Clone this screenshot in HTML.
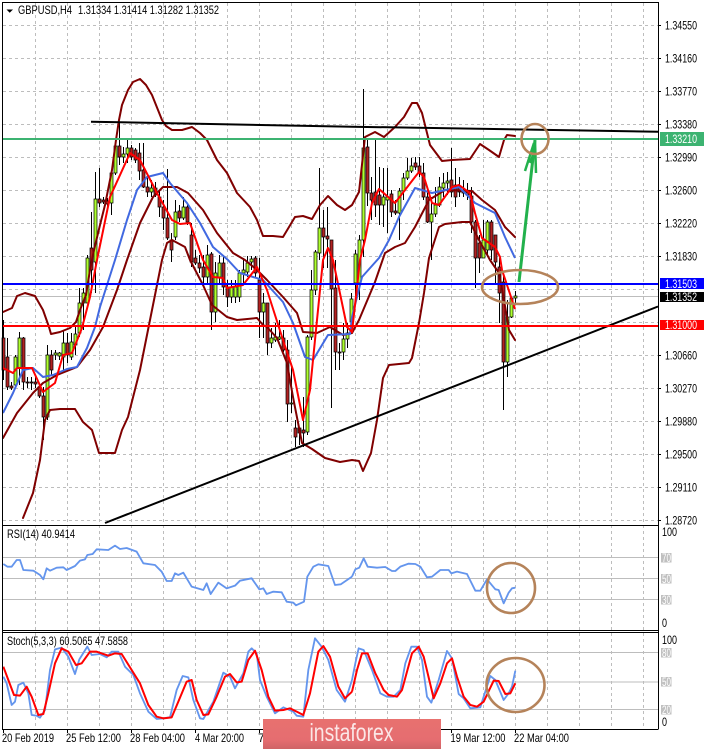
<!DOCTYPE html>
<html><head><meta charset="utf-8"><title>GBPUSD H4</title>
<style>html,body{margin:0;padding:0;background:#fff}svg{display:block}text{font-family:"Liberation Sans",sans-serif;font-size:11.6px;fill:#000}</style></head>
<body>
<svg width="704" height="750" viewBox="0 0 704 750" xmlns="http://www.w3.org/2000/svg">
<rect width="704" height="750" fill="#fff"/>
<!-- grid -->
<path d="M3 25.5H658M3 58.5H658M3 91.5H658M3 124.5H658M3 157.5H658M3 190.5H658M3 223.5H658M3 256.5H658M3 289.5H658M3 322.5H658M3 355.5H658M3 388.5H658M3 421.5H658M3 454.5H658M3 487.5H658M3 520.5H658" stroke="#bdbdbd" stroke-width="1" stroke-dasharray="3 3" fill="none"/>
<path d="M35.5 3V729M67.5 3V729M99.5 3V729M131.5 3V729M163.5 3V729M195.5 3V729M227.5 3V729M259.5 3V729M291.5 3V729M323.5 3V729M355.5 3V729M387.5 3V729M419.5 3V729M451.5 3V729M483.5 3V729M515.5 3V729M547.5 3V729M579.5 3V729M611.5 3V729M643.5 3V729" stroke="#bdbdbd" stroke-width="1" stroke-dasharray="3 3" fill="none"/>
<path d="M3 296.5H658" stroke="#bdbdbd" stroke-width="1"/>
<path d="M3 557.5H658M3 578.5H658M3 599.5H658M3 652.5H658M3 682H658M3 709.5H658" stroke="#bdbdbd" stroke-width="1"/>
<!-- wicks -->
<path stroke="#000" stroke-width="1" fill="none" d="M3.5 320V380M7.5 338V390M11.5 382V390M15.5 355V388M19.5 332V385M23.5 337V390M27.5 377V388M31.5 377V390M35.5 377V388M39.5 383V398M43.5 387V440M47.5 345V420M51.5 350V375M55.5 350V360M59.5 352V360M63.5 330V372M67.5 333V363M71.5 333V360M75.5 327V355M79.5 288V337M83.5 288V330M87.5 255V303M91.5 212V293M95.5 172V293M99.5 168V207M103.5 197V204M107.5 198V208M111.5 170V215M115.5 138V175M119.5 122V165M123.5 147V163M127.5 140V163M131.5 145V160M135.5 148V163M139.5 143V180M143.5 143V188M147.5 177V197M151.5 180V197M155.5 182V197M159.5 190V217M163.5 200V230M167.5 169V240M171.5 233V262M175.5 200V240M179.5 205V222M183.5 197V220M187.5 203V225M191.5 223V267M195.5 250V265M199.5 255V273M203.5 255V287M207.5 245V285M211.5 252V330M215.5 262V322M219.5 255V285M223.5 255V295M227.5 280V307M231.5 280V303M235.5 280V303M239.5 270V302M243.5 258V283M247.5 256V277M251.5 256V270M255.5 256V277M259.5 258V338M263.5 293V338M267.5 303V355M271.5 328V348M275.5 323V342M279.5 320V340M283.5 330V352M287.5 340V422M291.5 367V413M295.5 420V447M299.5 428V445M303.5 397V447M307.5 335V435M311.5 270V340M315.5 250V295M319.5 168V260M323.5 210V268M327.5 207V268M331.5 240V408M335.5 260V370M339.5 343V370M343.5 323V360M347.5 323V348M351.5 293V333M355.5 250V300M359.5 235V300M363.5 89V257M367.5 138V206M371.5 177V220M375.5 138V217M379.5 167V225M383.5 168V227M387.5 168V233M391.5 190V217M395.5 200V215M399.5 188V240M403.5 173V200M407.5 158V180M411.5 158V173M415.5 157V170M419.5 157V177M423.5 163V200M427.5 190V223M431.5 197V260M435.5 187V217M439.5 177V207M443.5 173V197M447.5 172V195M451.5 148V197M455.5 168V207M459.5 177V197M463.5 180V197M467.5 183V200M471.5 187V233M475.5 220V288M479.5 235V273M483.5 220V258M487.5 220V257M491.5 220V260M495.5 235V285M499.5 258V323M503.5 273V410M507.5 300V377M511.5 297V318M515.5 291V305"/>
<!-- bear bodies -->
<path fill="#b22222" stroke="#000" stroke-width=".7" d="M2 338h3v32h-3zM6 357h3v30h-3zM10 386h3v2h-3zM22 338h3v44h-3zM26 382h3v1h-3zM30 382h3v1h-3zM34 382h3v2h-3zM38 387h3v9h-3zM42 396h3v21h-3zM50 355h3v15h-3zM66 343h3v12h-3zM90 248h3v22h-3zM98 199h3v4h-3zM102 200h3v2h-3zM106 201h3v3h-3zM118 146h3v11h-3zM130 148h3v9h-3zM134 150h3v10h-3zM138 153h3v18h-3zM142 170h3v17h-3zM146 187h3v5h-3zM154 188h3v7h-3zM158 197h3v10h-3zM162 207h3v11h-3zM166 218h3v20h-3zM170 240h3v10h-3zM178 211h3v7h-3zM186 207h3v15h-3zM190 235h3v27h-3zM194 258h3v5h-3zM198 263h3v5h-3zM202 267h3v10h-3zM210 254h3v58h-3zM222 263h3v24h-3zM226 287h3v10h-3zM254 258h3v15h-3zM258 280h3v32h-3zM266 303h3v40h-3zM282 338h3v12h-3zM286 350h3v54h-3zM294 428h3v9h-3zM298 428h3v5h-3zM302 430h3v3h-3zM322 228h3v9h-3zM326 236h3v3h-3zM330 240h3v49h-3zM334 288h3v64h-3zM338 352h3v1h-3zM366 147h3v46h-3zM370 193h3v7h-3zM374 192h3v13h-3zM378 195h3v10h-3zM390 194h3v18h-3zM394 211h3v2h-3zM414 163h3v4h-3zM418 166h3v7h-3zM422 173h3v24h-3zM426 197h3v25h-3zM450 180h3v12h-3zM454 185h3v12h-3zM458 187h3v5h-3zM462 190h3v3h-3zM466 192h3v3h-3zM470 196h3v26h-3zM474 222h3v36h-3zM478 243h3v15h-3zM490 222h3v28h-3zM494 235h3v27h-3zM498 267h3v26h-3zM502 282h3v80h-3z"/>
<!-- bull bodies -->
<path fill="#adff2f" stroke="#000" stroke-width=".7" d="M14 357h3v28h-3zM18 338h3v30h-3zM46 355h3v62h-3zM54 353h3v2h-3zM58 353h3v3h-3zM62 343h3v14h-3zM70 342h3v15h-3zM74 334h3v11h-3zM78 303h3v30h-3zM82 293h3v10h-3zM86 258h3v45h-3zM94 199h3v63h-3zM110 173h3v30h-3zM114 146h3v27h-3zM122 154h3v3h-3zM126 148h3v6h-3zM150 188h3v4h-3zM174 212h3v25h-3zM182 207h3v11h-3zM206 255h3v22h-3zM214 273h3v39h-3zM218 263h3v14h-3zM230 287h3v10h-3zM234 287h3v10h-3zM238 273h3v24h-3zM242 270h3v3h-3zM246 263h3v9h-3zM250 259h3v3h-3zM262 303h3v9h-3zM270 338h3v5h-3zM274 337h3v3h-3zM278 337h3v2h-3zM290 403h3v1h-3zM306 337h3v95h-3zM310 290h3v47h-3zM314 252h3v38h-3zM318 228h3v25h-3zM342 339h3v13h-3zM346 333h3v6h-3zM350 299h3v23h-3zM354 254h3v29h-3zM358 240h3v43h-3zM362 148h3v92h-3zM382 197h3v8h-3zM386 197h3v3h-3zM398 191h3v22h-3zM402 178h3v13h-3zM406 171h3v7h-3zM410 166h3v5h-3zM430 214h3v8h-3zM434 205h3v9h-3zM438 187h3v18h-3zM442 183h3v5h-3zM446 181h3v2h-3zM482 240h3v18h-3zM486 222h3v28h-3zM506 317h3v45h-3zM510 298h3v19h-3zM514 296h3v2h-3z"/>
<!-- Bollinger bands -->
<g fill="none" stroke="#800000" stroke-width="2" stroke-linejoin="round" stroke-linecap="round">
<polyline points="3,312 12,308 17,296 25,293 35,296 43,310 49,327 51,334 60,332 70,328 76,322 80,310 86,295 90,270 94,250 100,225 105,205 112,170 116,140 119,120 122,105 128,90 133,82 140,79 146,85 152,95 158,110 162,120 166,126 172,130 182,130 192,127 200,133 207,140 217,160 227,173 237,193 250,207 257,220 263,236 273,236 283,237 295,217 303,216 312,219 320,205 328,196 337,205 345,210 352,205 359,192 365,137 375,132 384,137 395,127 404,117 412,103 417,103 422,113 430,145 442,161 452,160 470,159 480,144 489,150 499,157 504,140 507,135 515,136"/>
<polyline points="23,518 33,493 40,460 45,420 50,410 60,409 75,409 83,422 92,430 99,453 115,453 122,430 128,417 140,370 147,335 157,285 162,260 167,243 172,240 185,247 190,260 203,285 212,305 227,317 237,320 257,318 263,325 267,327 277,338 287,363 293,397 302,443 312,449 325,458 340,462 352,460 359,461 363,471 371,453 377,420 383,378 389,365 409,363 412,358 419,323 424,293 429,258 439,227 445,224 462,222 470,222 479,240 490,260 499,273 504,300 509,330 515,340"/>
<polyline points="3,438 17,413 33,393 43,383 57,375 77,367 90,350 103,327 117,290 127,260 140,223 153,197 163,187 177,187 188,193 203,210 217,233 233,253 245,260 257,270 267,280 283,297 297,313 303,332 317,333 330,327 343,335 352,333 359,320 375,282 385,253 395,247 405,243 415,227 429,200 445,190 472,191 482,200 495,210 505,227 515,237"/>
</g>
<!-- blue MA -->
<polyline fill="none" stroke="#4169e1" stroke-width="2" stroke-linejoin="round" points="3,413 13,393 23,370 33,368 43,377 53,375 67,369 77,367 87,348 95,327 100,307 115,260 127,220 137,190 147,177 163,173 170,183 187,203 200,223 213,247 228,260 240,273 263,280 283,302 293,323 305,357 313,360 328,335 350,334 352,317 362,277 379,258 389,240 399,217 415,188 432,193 459,187 475,203 495,213 505,237 515,258"/>
<!-- red MA -->
<polyline fill="none" stroke="#ff0000" stroke-width="2" stroke-linejoin="round" points="3,368 13,373 17,368 32,368 43,392 55,383 63,355 72,353 82,328 90,297 97,260 110,197 130,153 140,160 157,193 172,220 180,224 190,223 203,260 213,277 223,278 227,288 243,285 257,267 267,290 283,340 293,370 303,420 310,390 323,260 328,248 333,260 347,327 352,332 360,260 365,240 372,203 379,189 395,203 415,177 419,172 424,177 432,203 439,205 452,187 459,185 470,193 475,213 482,238 495,247 500,257 502,270 515,309"/>
<!-- trend lines -->
<path d="M91 121.7L352 126.7L658 131.7" stroke="#000" stroke-width="2" fill="none"/>
<path d="M105 523L658 306.5" stroke="#000" stroke-width="2" fill="none"/>
<!-- horizontal levels -->
<rect x="3" y="138" width="656" height="2" fill="#3cb371"/>
<rect x="3" y="283" width="656" height="2" fill="#0000ff"/>
<rect x="3" y="325" width="656" height="2" fill="#ff0000"/>
<!-- arrow -->
<path d="M519 282L535 140" stroke="#22b14c" stroke-width="3" fill="none"/>
<path d="M525 171L534 143M536 173L535 141M530 163L535 150" stroke="#22b14c" stroke-width="2.5" fill="none"/>
<!-- RSI -->
<g transform="translate(0,520) scale(.33333)" fill="none" stroke="#6495ed" stroke-width="5.5" stroke-linejoin="round">
<polyline points="10,132 22,140 35,140 50,120 60,120 70,150 100,152 120,165 130,178 140,145 150,152 170,143 190,142 200,150 225,138 240,122 255,118 262,105 278,102 290,88 325,90 345,77 360,87 380,84 410,95 430,130 465,135 485,155 500,183 515,183 525,160 535,165 550,158 575,200 610,210 620,190 632,222 655,188 680,205 705,197 720,182 755,175 778,208 790,205 800,222 820,215 845,217 860,245 880,248 888,256 912,245 922,170 940,140 955,133 985,138 1005,195 1022,193 1056,170"/>
<polyline transform="translate(1056,0)" points="0,170 10,148 22,143 35,115 47,140 75,143 100,141 120,153 130,153 145,140 170,131 190,132 205,140 225,172 240,170 265,150 290,150 298,160 315,155 345,162 370,212 385,212 405,178 430,208 440,210 455,250 470,218 480,205 490,203"/>
<!-- stoch blue -->
<polyline points="10,470 20,490 35,555 45,545 55,495 70,488 85,520 95,585 110,587 120,593 135,570 150,450 165,388 185,383 205,410 225,462 238,418 262,380 275,405 300,402 320,412 335,395 355,395 375,440 400,465 420,520 445,575 470,597 490,595 510,592 530,510 548,468 565,472 580,540 600,595 610,597 640,545 670,458 690,470 705,505 730,460 745,395 755,385 770,400 780,480 800,530 825,580 850,562 880,575 890,587 910,590 925,450 945,355 965,380 985,420 1010,510 1035,545 1056,480"/>
<polyline transform="translate(1056,0)" points="0,480 10,430 20,385 35,390 60,450 85,520 105,530 125,530 145,510 160,430 178,380 195,380 210,420 225,530 238,548 260,480 285,393 300,415 320,522 335,535 355,565 385,562 395,530 415,468 430,480 455,540 470,520 480,500 490,452"/>
<!-- stoch red -->
<polyline stroke="#ff0000" stroke-width="6" points="10,440 25,480 42,525 60,527 80,500 95,530 115,585 130,582 145,520 165,430 185,385 205,395 228,435 245,430 270,395 290,395 325,407 345,400 365,402 395,450 420,490 445,555 470,590 490,595 515,592 535,545 560,485 575,480 590,540 610,585 625,583 650,530 675,470 690,462 710,487 725,485 745,420 765,392 785,450 805,530 825,572 850,570 870,565 890,575 910,585 930,520 955,395 970,378 990,410 1015,500 1035,535 1056,515"/>
<polyline transform="translate(1056,0)" stroke="#ff0000" stroke-width="6" points="0,515 15,450 30,400 47,400 70,460 95,510 110,525 135,530 150,510 180,400 200,380 215,410 245,535 265,490 285,430 300,415 315,470 335,530 355,555 375,560 395,545 425,482 440,483 460,522 475,520 490,490"/>
</g>
<!-- brown circles -->
<g fill="none" stroke="#b5835a" stroke-width="2.6">
<ellipse cx="535" cy="139" rx="13.5" ry="15"/>
<ellipse cx="520" cy="287" rx="38" ry="17"/>
<ellipse cx="511" cy="588" rx="24" ry="25"/>
<ellipse cx="515.5" cy="685" rx="29" ry="27"/>
</g>
<!-- panel frames -->
<path d="M2.5 3V729M2 2.5H658.5M658.5 2V729M2 525.5H658.5M2 630.5H658.5M2 632.5H658.5M2 729.5H658.5" stroke="#000" stroke-width="1" fill="none"/>
<!-- ticks -->
<path d="M658 25.5h3M658 58.5h3M658 91.5h3M658 124.5h3M658 157.5h3M658 190.5h3M658 223.5h3M658 256.5h3M658 355.5h3M658 388.5h3M658 421.5h3M658 454.5h3M658 487.5h3M658 520.5h3M3.5 729v4M67.5 729v4M131.5 729v4M195.5 729v4M259.5 729v4M451.5 729v4M515.5 729v4" stroke="#000" stroke-width="1" fill="none"/>
<!-- price labels -->
<g>
<text x="665" y="29.5" textLength="32" lengthAdjust="spacingAndGlyphs">1.34550</text>
<text x="665" y="62.5" textLength="32" lengthAdjust="spacingAndGlyphs">1.34160</text>
<text x="665" y="95.5" textLength="32" lengthAdjust="spacingAndGlyphs">1.33770</text>
<text x="665" y="128.5" textLength="32" lengthAdjust="spacingAndGlyphs">1.33380</text>
<text x="665" y="161.5" textLength="32" lengthAdjust="spacingAndGlyphs">1.32990</text>
<text x="665" y="194.5" textLength="32" lengthAdjust="spacingAndGlyphs">1.32600</text>
<text x="665" y="227.5" textLength="32" lengthAdjust="spacingAndGlyphs">1.32220</text>
<text x="665" y="260.5" textLength="32" lengthAdjust="spacingAndGlyphs">1.31830</text>
<text x="665" y="359.5" textLength="32" lengthAdjust="spacingAndGlyphs">1.30660</text>
<text x="665" y="392.5" textLength="32" lengthAdjust="spacingAndGlyphs">1.30270</text>
<text x="665" y="425.5" textLength="32" lengthAdjust="spacingAndGlyphs">1.29880</text>
<text x="665" y="458.5" textLength="32" lengthAdjust="spacingAndGlyphs">1.29500</text>
<text x="665" y="491.5" textLength="32" lengthAdjust="spacingAndGlyphs">1.29110</text>
<text x="665" y="524.5" textLength="32" lengthAdjust="spacingAndGlyphs">1.28720</text>
</g>
<!-- coloured price tags -->
<rect x="660" y="132" width="44" height="14" fill="#3cb371"/>
<text x="665" y="143" textLength="32" lengthAdjust="spacingAndGlyphs" style="fill:#fff">1.33210</text>
<rect x="660" y="278" width="44" height="11" fill="#0000ff"/>
<text x="665" y="288" textLength="32" lengthAdjust="spacingAndGlyphs" style="fill:#fff">1.31503</text>
<rect x="660" y="292" width="44" height="10" fill="#000"/>
<text x="665" y="301" textLength="32" lengthAdjust="spacingAndGlyphs" style="fill:#fff">1.31352</text>
<rect x="660" y="320" width="44" height="10" fill="#ff0000"/>
<text x="665" y="329" textLength="32" lengthAdjust="spacingAndGlyphs" style="fill:#fff">1.31000</text>
<!-- header -->
<path d="M6.5 9.5H13L9.7 12.8Z" fill="#000"/>
<text x="18" y="14" textLength="54" lengthAdjust="spacingAndGlyphs">GBPUSD,H4</text>
<text x="78" y="14" textLength="141" lengthAdjust="spacingAndGlyphs">1.31334 1.31414 1.31282 1.31352</text>
<text x="7" y="538" textLength="68" lengthAdjust="spacingAndGlyphs">RSI(14) 40.9414</text>
<text x="7" y="645" textLength="121" lengthAdjust="spacingAndGlyphs">Stoch(5,3,3) 60.5065 47.5858</text>
<!-- sub panel scales -->
<text x="662" y="536" textLength="15" lengthAdjust="spacingAndGlyphs">100</text>
<rect x="661" y="553" width="10.5" height="9.5" fill="#c0c0c0"/>
<text x="662" y="562" textLength="9" lengthAdjust="spacingAndGlyphs" style="fill:#fff">70</text>
<rect x="661" y="574" width="10.5" height="9.5" fill="#c0c0c0"/>
<text x="662" y="583" textLength="9" lengthAdjust="spacingAndGlyphs" style="fill:#fff">50</text>
<rect x="661" y="595" width="10.5" height="9.5" fill="#c0c0c0"/>
<text x="662" y="604" textLength="9" lengthAdjust="spacingAndGlyphs" style="fill:#fff">30</text>
<text x="662" y="627" textLength="5" lengthAdjust="spacingAndGlyphs">0</text>
<text x="662" y="644" textLength="15" lengthAdjust="spacingAndGlyphs">100</text>
<rect x="661" y="648" width="10.5" height="9.5" fill="#c0c0c0"/>
<text x="662" y="657" textLength="9" lengthAdjust="spacingAndGlyphs" style="fill:#fff">80</text>
<rect x="661" y="677" width="10.5" height="9.5" fill="#c0c0c0"/>
<text x="662" y="686" textLength="9" lengthAdjust="spacingAndGlyphs" style="fill:#fff">50</text>
<rect x="661" y="705" width="10.5" height="9.5" fill="#c0c0c0"/>
<text x="662" y="714" textLength="9" lengthAdjust="spacingAndGlyphs" style="fill:#fff">20</text>
<text x="662" y="726" textLength="5" lengthAdjust="spacingAndGlyphs">0</text>
<!-- time axis -->
<text x="2" y="742" textLength="52" lengthAdjust="spacingAndGlyphs">20 Feb 2019</text>
<text x="66" y="742" textLength="55" lengthAdjust="spacingAndGlyphs">25 Feb 12:00</text>
<text x="130" y="742" textLength="55" lengthAdjust="spacingAndGlyphs">28 Feb 04:00</text>
<text x="195" y="742" textLength="49" lengthAdjust="spacingAndGlyphs">4 Mar 20:00</text>
<text x="258" y="742">7</text>
<text x="450.5" y="742" textLength="55" lengthAdjust="spacingAndGlyphs">19 Mar 12:00</text>
<text x="514" y="742" textLength="55" lengthAdjust="spacingAndGlyphs">22 Mar 04:00</text>
<!-- logo -->
<defs><linearGradient id="lg" x1="0" y1="0" x2="0" y2="1"><stop offset="0" stop-color="#e8716f"/><stop offset=".7" stop-color="#e56d70"/><stop offset="1" stop-color="#cf6466"/></linearGradient></defs>
<rect x="263" y="719" width="178" height="30" fill="url(#lg)"/>
<text x="309.5" y="741" textLength="84" lengthAdjust="spacingAndGlyphs" style="font-size:25px;fill:#fbe6e6">instaforex</text>
</svg>
</body></html>
